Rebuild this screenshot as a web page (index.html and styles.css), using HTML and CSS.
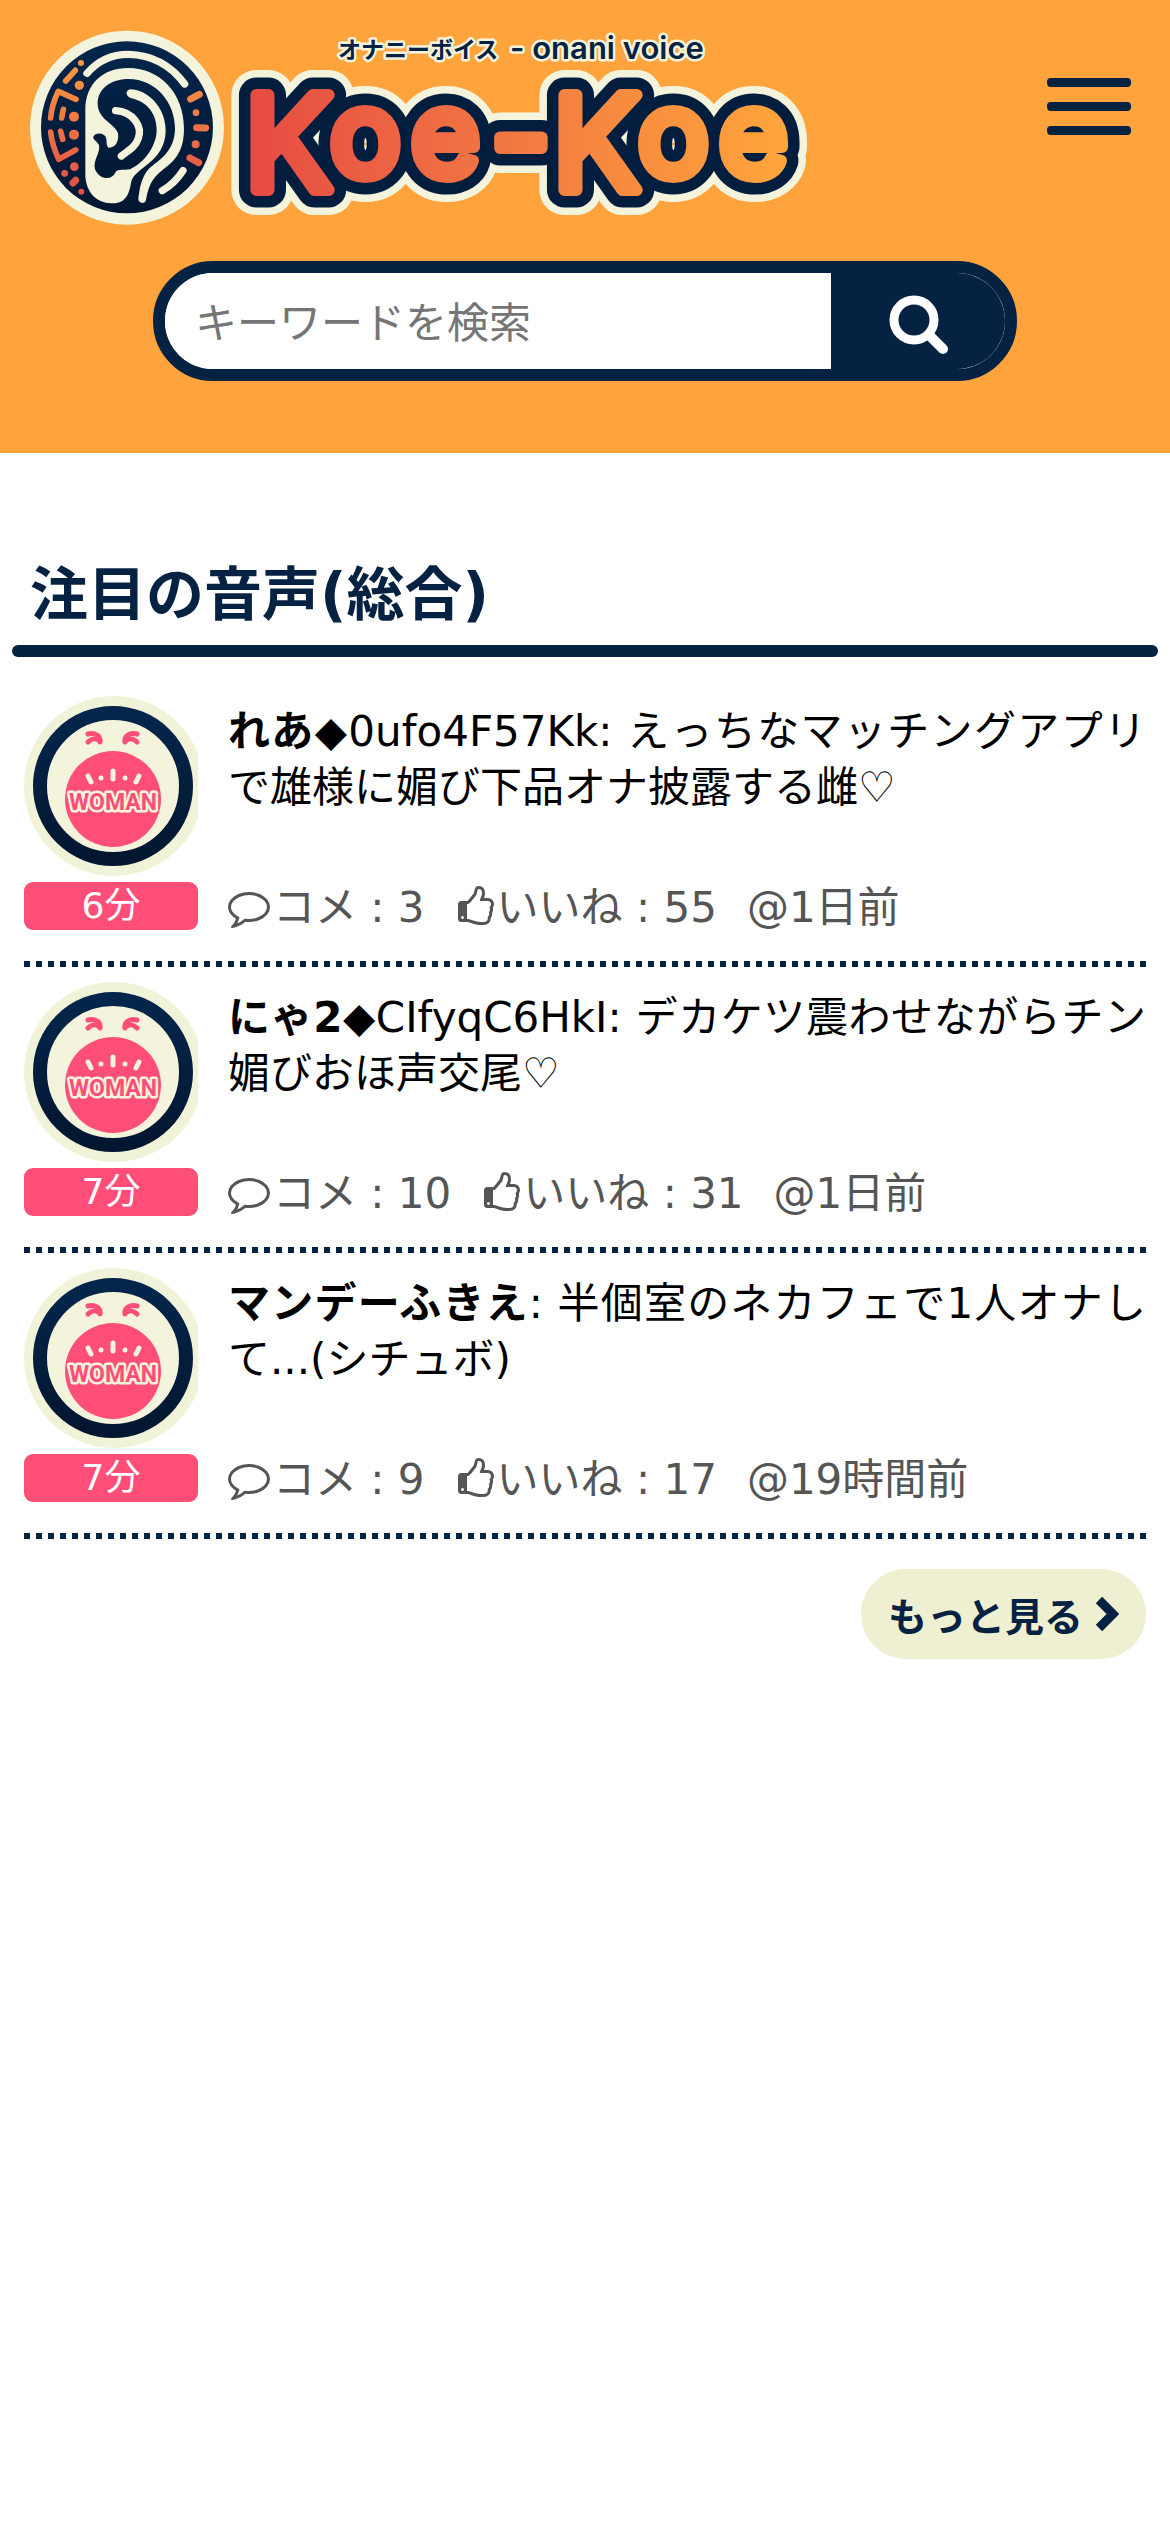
FILE: index.html
```html
<!DOCTYPE html>
<html lang="ja">
<head>
  <meta charset="UTF-8">
  <meta name="viewport" content="width=device-width, initial-scale=1.0">
  <title>Koe-Koe</title>
  <link rel="stylesheet" href="styles.css">
</head>
<body>

  <!-- shared icons -->
  <svg class="sprite" aria-hidden="true">
    <defs>
      <linearGradient id="ring" x1="0" y1="0" x2="0" y2="1">
        <stop offset="0" stop-color="#04264c"/>
        <stop offset="1" stop-color="#021630"/>
      </linearGradient>
    </defs>
    <symbol id="woman" viewBox="0 0 174 180">
      <circle cx="90" cy="90" r="90" fill="#f1f3d9"/>
      <circle cx="89" cy="90" r="73" fill="#f4f3dc" stroke="url(#ring)" stroke-width="14"/>
      <circle cx="89" cy="103" r="48" fill="#ff4f79"/>
      <g fill="none" stroke="#ff4f79" stroke-width="5" stroke-linecap="round">
        <path d="M64 38c7-2 13 2 12 8M64 46c3-3 7-4 10-2"/>
        <path d="M113 38c-7-2-13 2-12 8M113 46c-3-3-7-4-10-2"/>
      </g>
      <g stroke="#f4f3dc" stroke-width="5" stroke-linecap="round">
        <path d="M64 80l3 6M89 75v8M115 80l-3 6M77 82h0M101 82h0"/>
      </g>
    </symbol>
    <symbol id="comment" viewBox="0 0 1792 1792">
      <path d="M896 384q-204 0-381.500 69.500t-282 187.500-104.500 255q0 112 71.500 213.500t201.500 175.500l87 50-27 96q-24 91-70 172 152-63 275-171l43-38 57 6q69 8 130 8 204 0 381.500-69.500t282-187.500 104.500-255-104.500-255-282-187.500-381.500-69.500zm896 512q0 174-120 321.500t-326 233-450 85.500q-70 0-145-8-198 175-460 242-49 14-114 22h-5q-15 0-27-10.500t-16-27.500v-1q-3-4-.5-12t2-10 4.500-9.500l6-9 7-8.500 8-9q7-8 31-34.500t34.500-38 31-39.500 32.500-51 27-59 26-76q-157-89-247.500-220t-90.500-281q0-174 120-321.500t326-233 450-85.500 450 85.500 326 233 120 321.500z"/>
    </symbol>
    <symbol id="thumb" viewBox="0 0 1664 1792">
      <path d="M384 1344q0-26-19-45t-45-19-45 19-19 45 19 45 45 19 45-19 19-45zm1152-576q0-51-39-89.500t-89-38.500h-352q0-58 48-159.500t48-160.500q0-98-32-145t-128-47q-26 26-38 85t-30.500 125.500-59.500 109.500q-22 23-77 91-4 5-23 30t-31.500 41-34.500 42.500-40 44-38.500 35.500-40 27-35.500 9h-32v640h32q13 0 31.500 3t33 6.500 38 11 35 11.500 35.500 12.500 29 10.500q211 73 342 73h121q192 0 192-167 0-26-5-56 30-16 47.500-52.500t17.500-73.500-18-69q53-50 53-119 0-25-10-55.500t-25-47.500q32-1 53.500-47t21.500-81zm128-1q0 89-49 163 9 33 9 69 0 77-38 144 3 21 3 43 0 101-60 178 1 139-85 219.500t-227 80.500h-129q-96 0-189.500-22.500t-216.500-65.500q-116-40-138-40h-288q-53 0-90.500-37.500t-37.500-90.500v-640q0-53 37.500-90.500t90.500-37.500h274q36-24 137-155 58-75 107-128 24-25 35.500-85.500t30.500-126.500 62-108q39-37 90-37 84 0 151 32.500t102 101.500 35 186q0 93-48 192h176q104 0 180 76t76 179z"/>
    </symbol>
  </svg>

  <header class="header">
    <div class="header-top">
      <a href="#" class="logo" aria-label="Koe-Koe">
        <svg viewBox="0 0 820 240" width="820" height="240">
          <defs>
            <linearGradient id="fade" gradientUnits="userSpaceOnUse" x1="250" y1="0" x2="790" y2="0">
              <stop offset="0" stop-color="#e64b43"/>
              <stop offset=".5" stop-color="#f27a42"/>
              <stop offset="1" stop-color="#ffa63a"/>
            </linearGradient>
            <linearGradient id="deco" gradientUnits="userSpaceOnUse" x1="0" y1="180" x2="0" y2="590">
              <stop offset="0" stop-color="#fb9c40"/>
              <stop offset="1" stop-color="#e04a48"/>
            </linearGradient>
            <g id="name" class="name">
              <text x="245" y="190">K<tspan class="name-small" x="330 411" y="176">oe</tspan></text>
              <text x="491" y="183">-</text>
              <text x="553" y="190">K<tspan class="name-small" x="638 719" y="176">oe</tspan></text>
            </g>
          </defs>

          <!-- ear mark -->
          <g transform="scale(.3333)" fill="none" stroke-linecap="round" stroke-linejoin="round">
            <circle cx="381" cy="383" r="291" fill="#f4f3dc"/>
            <circle cx="381" cy="382" r="258" fill="url(#ring)"/>
            <path fill="#f4f3dc" d="M256 330L256 530C262 590 300 610 340 610C378 610 388 580 393 550C400 500 497 490 497 390C497 320 440 268 390 268C375 272 376 290 395 295C440 305 470 340 470 390C470 440 430 490 390 508C365 512 350 505 345 520C335 540 300 542 285 508C278 480 302 460 297 435C290 420 278 420 280 410C285 400 300 398 312 405C325 415 315 430 325 443C345 445 358 425 354 400C345 370 293 360 293 310C293 265 335 237 385 237C470 237 525 310 525 385C525 440 495 470 460 495C425 520 420 560 415 595C414 610 435 615 438 600C445 560 455 535 485 512C530 480 552 450 552 385C552 280 480 204 385 204C310 204 256 250 256 330Z"/>
            <g stroke="#f4f3dc" stroke-width="22">
              <path d="M261 220Q310 163 385 163Q490 165 554 252"/>
              <path d="M347 332C400 335 428 380 415 415C407 440 385 452 364 468"/>
              <path d="M549 512Q525 550 487 572"/>
            </g>
            <g stroke="url(#deco)" stroke-width="17">
              <path d="M226 211L197 243M152 354Q155 315 175 274L228 298M190 328L185 354M152 396Q156 435 176 478L227 450M182 394L188 418"/>
              <path stroke-width="21" d="M572 297L598 283M590 383L617 384M570 474L596 488M219 549L227 541"/>
            </g>
            <g fill="url(#deco)">
              <circle cx="243" cy="189" r="9"/>
              <circle cx="238" cy="256" r="14"/>
              <circle cx="222" cy="350" r="15"/>
              <circle cx="222" cy="404" r="15"/>
              <circle cx="223" cy="500" r="13"/>
              <circle cx="194" cy="520" r="10"/>
              <circle cx="244" cy="575" r="9"/>
              <circle cx="588" cy="338" r="10"/>
              <circle cx="587" cy="433" r="12"/>
            </g>
          </g>

          <!-- wordmark: cream edge, navy edge, colour -->
          <use href="#name" fill="#f4f3dc" stroke="#f4f3dc" stroke-width="50"/>
          <use href="#name" fill="#021d3d" stroke="#021d3d" stroke-width="35"/>
          <use href="#name" fill="url(#fade)" stroke="url(#fade)" stroke-width="12"/>
          <text class="tagline" x="338" y="58">オナニーボイス<tspan class="tagline-en" x="510" y="59">- onani voice</tspan></text>
        </svg>
      </a>
      <button class="menu" type="button" aria-label="メニュー">
        <span></span>
        <span></span>
        <span></span>
      </button>
    </div>

    <form class="search" action="#">
      <input type="text" name="q" placeholder="キーワードを検索" aria-label="キーワードを検索">
      <button type="submit" aria-label="検索">
        <svg viewBox="0 0 62 62" width="62" height="62" fill="none" stroke="#fff" stroke-linecap="round">
          <circle cx="27" cy="27" r="20" stroke-width="9"/>
          <path d="M42 42L56 56" stroke-width="10"/>
        </svg>
      </button>
    </form>
  </header>

  <main>
    <h2 class="heading">注目の音声(総合)</h2>

    <ul class="list">
      <li class="item">
        <div class="side">
          <svg class="avatar" viewBox="0 0 174 180"><use href="#woman"/><text x="89" y="114">WOMAN</text></svg>
          <span class="time">6分</span>
        </div>
        <div class="detail">
          <p class="title"><b>れあ</b>◆0ufo4F57Kk: えっちなマッチングアプリで雄様に媚び下品オナ披露する雌♡</p>
          <p class="meta">
            <span><svg class="icon"><use href="#comment"/></svg>コメ : 3</span>
            <span><svg class="icon icon-thumb"><use href="#thumb"/></svg>いいね : 55</span>
            <span>@1日前</span>
          </p>
        </div>
      </li>
      <li class="item">
        <div class="side">
          <svg class="avatar" viewBox="0 0 174 180"><use href="#woman"/><text x="89" y="114">WOMAN</text></svg>
          <span class="time">7分</span>
        </div>
        <div class="detail">
          <p class="title"><b>にゃ2</b>◆CIfyqC6HkI: デカケツ震わせながらチン媚びおほ声交尾♡</p>
          <p class="meta">
            <span><svg class="icon"><use href="#comment"/></svg>コメ : 10</span>
            <span><svg class="icon icon-thumb"><use href="#thumb"/></svg>いいね : 31</span>
            <span>@1日前</span>
          </p>
        </div>
      </li>
      <li class="item">
        <div class="side">
          <svg class="avatar" viewBox="0 0 174 180"><use href="#woman"/><text x="89" y="114">WOMAN</text></svg>
          <span class="time">7分</span>
        </div>
        <div class="detail">
          <p class="title"><b>マンデーふきえ</b>: 半個室のネカフェで1人オナして...(シチュボ)</p>
          <p class="meta">
            <span><svg class="icon"><use href="#comment"/></svg>コメ : 9</span>
            <span><svg class="icon icon-thumb"><use href="#thumb"/></svg>いいね : 17</span>
            <span>@19時間前</span>
          </p>
        </div>
      </li>
    </ul>

    <div class="more-row">
      <a href="#" class="more">もっと見る
        <svg viewBox="0 0 24 36" width="24" height="36" fill="none" stroke="#052242" stroke-width="9">
          <path d="M4 4L18 18L4 32"/>
        </svg>
      </a>
    </div>
  </main>

</body>
</html>
```

FILE: styles.css
```css
* {
  box-sizing: border-box;
}

body {
  margin: 0;
  background: #fff;
  color: #000;
  font-family: "DejaVu Sans", "Noto Sans CJK JP", sans-serif;
  font-size: 42px;
}

.sprite {
  position: absolute;
  width: 0;
  height: 0;
}

/* header */
.header {
  background: #ffa43d;
  padding-bottom: 72px;
}

.header-top {
  display: flex;
  justify-content: space-between;
  align-items: flex-start;
  padding-right: 39px;
}

.logo svg {
  display: block;
}

.name {
  font-family: Inter, sans-serif;
  font-size: 130px;
  font-weight: 400;
  stroke-linejoin: round;
}

.name-small {
  font-size: 118px;
}

.tagline {
  font-family: "Noto Sans CJK JP", sans-serif;
  font-size: 23px;
  font-weight: bold;
  fill: #052242;
  stroke: #f4f3dc;
  stroke-width: 5px;
  stroke-linejoin: round;
  paint-order: stroke;
}

.tagline-en {
  font-family: Inter, sans-serif;
  font-size: 31px;
  font-weight: 600;
}

.menu {
  display: flex;
  flex-direction: column;
  gap: 15px;
  width: 84px;
  margin-top: 78px;
  padding: 0;
  border: none;
  background: none;
  cursor: pointer;
}

.menu span {
  width: 100%;
  height: 9px;
  border-radius: 4px;
  background: #052242;
}

.search {
  display: flex;
  height: 120px;
  margin: 21px 153px 0;
  border: 12px solid #052242;
  border-radius: 60px;
  background: #fff;
  overflow: hidden;
}

.search input {
  flex: 1;
  min-width: 0;
  padding: 4px 30px 0;
  border: none;
  outline: none;
  background: #fff;
  font-family: inherit;
  font-size: 42px;
}

.search input::placeholder {
  color: #757575;
}

.search button {
  display: flex;
  align-items: center;
  justify-content: center;
  width: 174px;
  padding: 6px 0 0;
  border: none;
  background: #052242;
  cursor: pointer;
}

/* list */
.heading {
  margin: 100px 12px 0;
  color: #052242;
  font-size: 58px;
  line-height: 84px;
  text-indent: 18px;
}

.heading::after {
  content: "";
  display: block;
  height: 12px;
  margin-top: 8px;
  border-radius: 6px;
  background: #052242;
}

.list {
  margin: 24px 24px 0;
  padding: 0;
  list-style: none;
}

/* square dots under each row */
.item {
  display: flex;
  gap: 30px;
  padding: 15px 0 6px;
  background: repeating-linear-gradient(90deg, #052242 0 6px, transparent 6px 12px) left bottom / 100% 6px no-repeat;
}

.side {
  width: 174px;
  padding-bottom: 31px;
}

.avatar {
  display: block;
  width: 174px;
  height: 180px;
}

.avatar text {
  font-family: Roboto, sans-serif;
  font-size: 23px;
  font-weight: bold;
  text-anchor: middle;
  fill: #ff4f79;
  stroke: #f4f3dc;
  stroke-width: 5px;
  stroke-linejoin: round;
  paint-order: stroke;
}

.time {
  display: block;
  height: 48px;
  margin-top: 6px;
  border-radius: 9px;
  background: #ff4f79;
  color: #fff;
  font-size: 36px;
  line-height: 48px;
  text-align: center;
}

.detail {
  display: flex;
  flex: 1;
  flex-direction: column;
  justify-content: space-between;
  min-width: 0;
}

.title {
  margin: 8px 0 0;
  line-height: 56px;
  text-align: justify;
}

.meta {
  display: flex;
  gap: 30px;
  margin: 0 0 27px;
  color: #555;
}

.icon {
  width: 42px;
  height: 42px;
  margin-right: 3px;
  fill: #555;
  vertical-align: -6px;
}

.icon-thumb {
  width: 39px;
}

/* more */
.more-row {
  display: flex;
  justify-content: flex-end;
  padding: 30px 24px;
}

.more {
  display: flex;
  align-items: center;
  gap: 12px;
  height: 90px;
  padding: 0 27px;
  border-radius: 45px;
  background: #efefd2;
  color: #052242;
  font-size: 39px;
  font-weight: bold;
  text-decoration: none;
}
```
